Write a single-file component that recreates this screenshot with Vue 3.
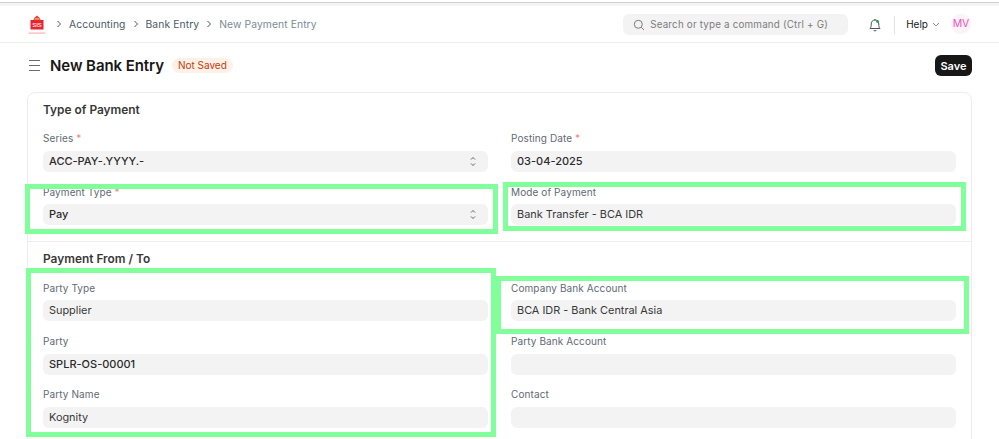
<script setup>
const sections = [
  {
    title: 'Type of Payment',
    fields: [
      { label: 'Series', required: true, value: 'ACC-PAY-.YYYY.-', bold: true, select: true },
      { label: 'Posting Date', required: true, value: '03-04-2025', bold: true },
      { label: 'Payment Type', required: true, value: 'Pay', bold: true, select: true },
      { label: 'Mode of Payment', value: 'Bank Transfer - BCA IDR' },
    ],
  },
  {
    title: 'Payment From / To',
    fields: [
      { label: 'Party Type', value: 'Supplier' },
      { label: 'Company Bank Account', value: 'BCA IDR - Bank Central Asia' },
      { label: 'Party', value: 'SPLR-OS-00001', bold: true },
      { label: 'Party Bank Account', value: '' },
      { label: 'Party Name', value: 'Kognity' },
      { label: 'Contact', value: '' },
    ],
  },
];

const crumbs = ['Accounting', 'Bank Entry'];
const marks = ['mark-type', 'mark-mode', 'mark-party', 'mark-bank'];
</script>

<template>
  <div class="page">
    <div class="top-strip"></div>
    <header class="navbar">
      <svg class="logo" width="18" height="20" viewBox="0 0 18 20">
        <path d="M5.500 5 C5.500 2.500 7.500 2 9 0.500 C10.500 2 12.500 2.500 12.500 5 Z" fill="#e0414a" />
        <rect x="6.500" y="3.300" width="5" height="1.300" fill="#f2b84a" />
        <rect x="2.500" y="5" width="13" height="9.500" fill="#e3262f" />
        <text x="9" y="12" text-anchor="middle" class="logo-mark">SIS</text>
        <rect x="0.500" y="17.500" width="17" height="1.200" fill="#f5b4b7" />
      </svg>
      <nav class="crumbs">
        <template v-for="crumb in crumbs" :key="crumb">
          <svg class="chevron" width="6" height="8" viewBox="0 0 6 8"><path d="M1.500 1 L4.500 4 L1.500 7" /></svg>
          <span class="crumb">{{ crumb }}</span>
        </template>
        <svg class="chevron" width="6" height="8" viewBox="0 0 6 8"><path d="M1.500 1 L4.500 4 L1.500 7" /></svg>
        <span class="crumb current">New Payment Entry</span>
      </nav>
      <div class="nav-right">
        <div class="search">
          <svg width="12" height="12" viewBox="0 0 12 12" fill="none" stroke="#7c7c7c" stroke-width="1">
            <circle cx="5.300" cy="5.300" r="4" />
            <path d="M8.300 8.300 L11 11" />
          </svg>
          <span>Search or type a command (Ctrl + G)</span>
        </div>
        <svg class="bell" width="14" height="14" viewBox="0 0 14 14" fill="none" stroke="#4c5257" stroke-width="1">
          <path d="M2 10.500 C3.200 9.200 3.200 7.800 3.200 6 C3.200 3.600 4.800 2 7 2 C9.200 2 10.800 3.600 10.800 6 C10.800 7.800 10.800 9.200 12 10.500 Z" />
          <path d="M7 1 V2 M5.500 12 C6 13.200 8 13.200 8.500 12" />
          <circle cx="9.500" cy="3.500" r="1.400" fill="#2d9a5a" stroke="none" />
        </svg>
        <div class="nav-sep"></div>
        <div class="help">
          Help
          <svg width="8" height="5" viewBox="0 0 8 5" fill="none" stroke="#7c7c7c" stroke-width="0.900"><path d="M1 1 L4 4 L7 1" /></svg>
        </div>
        <div class="avatar">MV</div>
      </div>
    </header>

    <div class="page-head">
      <svg class="menu" width="11" height="11" viewBox="0 0 11 11" stroke="#6b6b6b" stroke-width="1">
        <path d="M0 0.500 H11 M0 5.500 H11 M0 10.500 H11" />
      </svg>
      <h1>New Bank Entry</h1>
      <span class="badge">Not Saved</span>
      <button class="save">Save</button>
    </div>

    <main class="card">
      <section v-for="section in sections" :key="section.title" class="section">
        <h2>{{ section.title }}</h2>
        <div class="grid">
          <div v-for="field in section.fields" :key="field.label" class="field">
            <label>{{ field.label }}<span v-if="field.required" class="req"> *</span></label>
            <div class="input" :class="{ bold: field.bold }">
              {{ field.value }}
              <svg v-if="field.select" class="updown" width="6" height="11" viewBox="0 0 6 11" fill="none" stroke="#4c5257" stroke-width="0.900">
                <path d="M1 3.500 L3 1.500 L5 3.500 M1 7.500 L3 9.500 L5 7.500" />
              </svg>
            </div>
          </div>
        </div>
      </section>
    </main>

    <div v-for="mark in marks" :key="mark" class="mark" :class="mark"></div>
  </div>
</template>

<style>
html,
body {
  margin: 0;
  background: #fff;
  overflow: hidden;
}
</style>

<style scoped>
.page {
  position: relative;
  width: 999px;
  height: 439px;
  overflow: hidden;
  font-family: Inter, "Liberation Sans", sans-serif;
  color: #1f272e;
}

.top-strip {
  height: 2px;
  margin-bottom: 4px;
  border-bottom: 1px solid #cfcfcf;
  box-shadow: 0 3px 0 #f4f4f4;
}

.navbar {
  display: flex;
  align-items: center;
  height: 35px;
  padding: 0 28px 0 28px;
  border-bottom: 1px solid #ededed;
}

.logo {
  flex: none;
  margin-right: 10px;
}

.logo-mark {
  font-family: "Liberation Sans", sans-serif;
  font-size: 6px;
  font-weight: 700;
  fill: #fbd5d6;
}

.crumbs {
  display: flex;
  align-items: center;
  gap: 7px;
  margin-top: -1px;
  font-size: 10.300px;
  letter-spacing: 0.010em;
}

.chevron {
  fill: none;
  stroke: #4c5257;
  stroke-width: 1;
}

.crumb {
  color: #4c5a67;
}

.crumb.current {
  color: #7c8a96;
}

.nav-right {
  display: flex;
  align-items: center;
  margin-left: auto;
}

.search {
  display: flex;
  align-items: center;
  gap: 5px;
  width: 225px;
  height: 21px;
  padding-left: 10px;
  box-sizing: border-box;
  background: #f3f3f3;
  border-radius: 6px;
  color: #7c7c7c;
  font-size: 9.800px;
  letter-spacing: 0.020em;
  white-space: nowrap;
}

.bell {
  margin-left: 20px;
}

.nav-sep {
  width: 1px;
  height: 18px;
  margin: 0 11px 0 12px;
  background: #e2e2e2;
}

.help {
  display: flex;
  align-items: center;
  gap: 4px;
  font-size: 10px;
  color: #171717;
  margin-top: -2px;
}

.help svg {
  margin-top: 2px;
}

.avatar {
  width: 20px;
  height: 20px;
  margin-left: 11px;
  margin-top: -2px;
  border-radius: 50%;
  background: #fdf1fa;
  color: #e659b3;
  font-size: 10.500px;
  line-height: 20px;
  text-align: center;
}

.page-head {
  display: flex;
  align-items: center;
  height: 45px;
  padding: 0 27px 0 29px;
}

.menu {
  flex: none;
  margin-right: 10px;
}

h1 {
  margin: 0;
  font-size: 15px;
  font-weight: 600;
  color: #171717;
  letter-spacing: -0.005em;
}

.badge {
  margin-left: 8px;
  padding: 0 6px;
  height: 15px;
  line-height: 15px;
  background: #fff1e7;
  border-radius: 8px;
  color: #bd3e0c;
  font-size: 10px;
}

.save {
  margin-left: auto;
  width: 37px;
  height: 21px;
  padding: 0;
  border: 0;
  border-radius: 6px;
  background: #171717;
  color: #fff;
  font-family: inherit;
  font-size: 11px;
  font-weight: 600;
}

.card {
  width: 945px;
  margin: 4px 0 0 27px;
  box-sizing: border-box;
  border: 1px solid #ededed;
  border-radius: 8px;
  height: 400px;
}

.section {
  padding: 10px 15px 0;
}

.section + .section {
  border-top: 1px solid #ededed;
  margin-top: 16px;
}

h2 {
  margin: 0;
  height: 14px;
  line-height: 14px;
  font-size: 11.900px;
  font-weight: 600;
  color: #383838;
}

.grid {
  display: grid;
  grid-template-columns: 445px 445px;
  column-gap: 23px;
  row-gap: 13.600px;
  margin-top: 15.200px;
}

.field {
  height: 39.800px;
}

label {
  display: block;
  height: 12px;
  line-height: 12px;
  margin-bottom: 6.800px;
  font-size: 10px;
  color: #5f6a74;
  letter-spacing: 0.010em;
}

.req {
  color: #f0868a;
}

.input {
  position: relative;
  height: 21px;
  line-height: 21px;
  padding-left: 6px;
  background: #f3f3f3;
  border-radius: 6px;
  font-size: 10.900px;
  color: #383838;
}

.input.bold {
  font-size: 11px;
  font-weight: 500;
  color: #2b2b2b;
}

.updown {
  position: absolute;
  right: 12px;
  top: 5px;
}

.mark {
  position: absolute;
  box-sizing: border-box;
  border: 5px solid #80ff9b;
}

.mark-type {
  left: 25px;
  top: 184px;
  width: 473px;
  height: 50px;
}

.mark-mode {
  left: 503px;
  top: 182px;
  width: 463px;
  height: 49px;
}

.mark-party {
  left: 26px;
  top: 268px;
  width: 470px;
  height: 169px;
}

.mark-bank {
  left: 496px;
  top: 276px;
  width: 473px;
  height: 58px;
}
</style>
